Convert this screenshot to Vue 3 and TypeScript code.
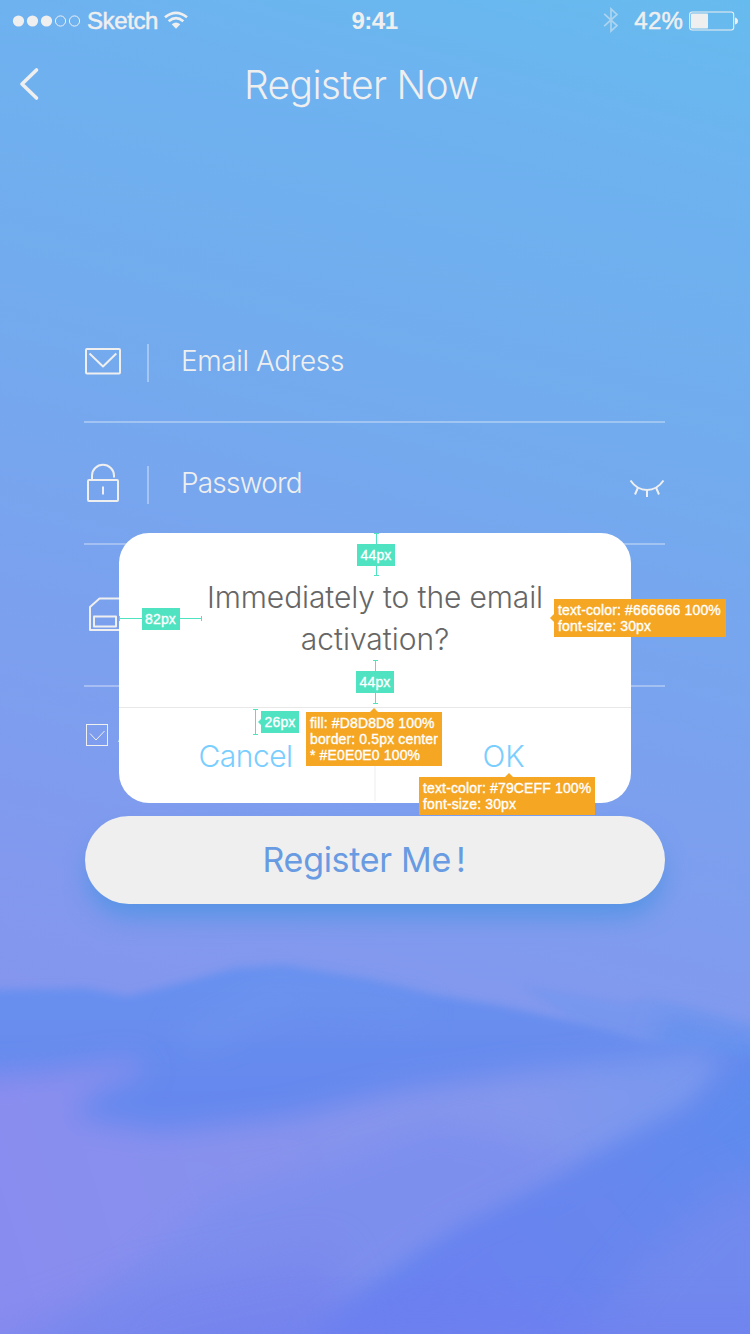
<script setup lang="ts">
interface Measure { id: string; label: string; axis: 'v' | 'h' }
interface Note { id: string; arrow: 'left' | 'top'; lines: string[] }

const measures: Measure[] = [
  { id: 'm-top', label: '44px', axis: 'v' },
  { id: 'm-left', label: '82px', axis: 'h' },
  { id: 'm-mid', label: '44px', axis: 'v' },
]
const notes: Note[] = [
  { id: 'n-text', arrow: 'left', lines: ['text-color: #666666 100%', 'font-size: 30px'] },
  { id: 'n-line', arrow: 'top', lines: ['fill: #D8D8D8 100%', 'border: 0.5px center', '* #E0E0E0 100%'] },
  { id: 'n-ok', arrow: 'top', lines: ['text-color: #79CEFF 100%', 'font-size: 30px'] },
]
</script>

<template>
  <div class="screen">
    <svg class="scenery" viewBox="0 0 750 1334" aria-hidden="true">
      <defs>
        <filter id="b3" x="-20%" y="-20%" width="140%" height="140%"><feGaussianBlur stdDeviation="4" /></filter>
        <filter id="b14" x="-30%" y="-30%" width="160%" height="160%"><feGaussianBlur stdDeviation="14" /></filter>
        <filter id="b24" x="-30%" y="-30%" width="160%" height="160%"><feGaussianBlur stdDeviation="22" /></filter>
        <linearGradient id="hill" x1="0" y1="960" x2="0" y2="1100" gradientUnits="userSpaceOnUse">
          <stop offset="0" stop-color="#6992ef" /><stop offset="1" stop-color="#6588ee" />
        </linearGradient>
        <linearGradient id="violet" x1="0" y1="1260" x2="650" y2="1060" gradientUnits="userSpaceOnUse">
          <stop offset="0" stop-color="#898cef" /><stop offset=".4" stop-color="#8792ed" /><stop offset=".8" stop-color="#8497ed" /><stop offset="1" stop-color="#7a98ee" />
        </linearGradient>
        <linearGradient id="deep" x1="750" y1="1080" x2="450" y2="1334" gradientUnits="userSpaceOnUse">
          <stop offset="0" stop-color="#5f8cee" /><stop offset=".5" stop-color="#6786ee" /><stop offset="1" stop-color="#6b80f0" />
        </linearGradient>
      </defs>
      <path filter="url(#b3)" fill="#6994ee" d="M520 984 L622 1002 L655 998 L760 1027 V1120 H600 V1040 Z" opacity=".4" />
      <path filter="url(#b14)" fill="#6491ee" d="M665 1016 L780 1044 V1100 H640 Z" />
      <path filter="url(#b3)" fill="url(#hill)" d="M-20 990 L86 988 L128 996 L191 980 L235 968 L285 965 L373 980 L431 994 L502 1006 L575 1022 L646 1042 L770 1060 V1350 H-20 Z" />
      <path filter="url(#b14)" fill="#7095ef" opacity=".6" d="M270 980 L420 1000 L430 1018 L300 1010 L200 1050 L170 1030 Z" />
      <path filter="url(#b14)" fill="url(#violet)" d="M-50 1078 L60 1070 L130 1060 L150 1070 L95 1092 L70 1116 L160 1132 L290 1117 L400 1090 L550 1068 L710 1050 L720 1070 L690 1112 L590 1160 L500 1205 L410 1250 L340 1300 L240 1400 H-50 Z" />
      <path filter="url(#b14)" fill="#7c8eee" opacity=".8" d="M435 1123 L500 1136 L575 1158 L510 1200 L400 1260 L300 1350 L60 1400 L40 1340 L140 1262 L215 1200 L340 1160 Z" />
      <path filter="url(#b24)" fill="#7684ed" opacity=".7" d="M-20 1345 L150 1285 L330 1250 L380 1400 H-20 Z" />
      <path filter="url(#b14)" fill="url(#deep)" d="M780 1050 L740 1068 L700 1105 L620 1150 L550 1188 L460 1230 L390 1285 L320 1330 L280 1400 H800 Z" />
      <path filter="url(#b24)" fill="#748aee" opacity=".8" d="M790 1160 L700 1200 L620 1290 L560 1370 H790 Z" />
      <path filter="url(#b24)" fill="#7080ef" opacity=".6" d="M180 1340 L400 1300 L620 1310 L800 1310 V1380 H150 Z" />
    </svg>

    <header class="status">
      <div class="carrier">
        <svg width="68" height="14" viewBox="0 0 68 14" fill="#efefef">
          <circle cx="6.5" cy="7" r="5.6" /><circle cx="20.5" cy="7" r="5.6" /><circle cx="34.5" cy="7" r="5.6" />
          <circle cx="48.5" cy="7" r="5.1" fill="none" stroke="#efefef" /><circle cx="62.5" cy="7" r="5.1" fill="none" stroke="#efefef" />
        </svg>
        <span class="sketch">Sketch</span>
        <svg class="wifi" width="24" height="19" viewBox="0 0 24 19" fill="none" stroke="#efefef" stroke-width="2.7">
          <path d="M1 6.2 Q12 -2.6 23 6.2" /><path d="M4.7 10.2 Q12 4.2 19.3 10.2" />
          <path d="M7.7 13.3 Q12 9.6 16.3 13.3 L12 17.8 Z" fill="#efefef" stroke="none" />
        </svg>
      </div>
      <span class="clock">9:41</span>
      <div class="power">
        <svg width="16" height="26" viewBox="0 0 16 26" fill="none" stroke="#efefef" stroke-width="1.7" opacity=".5">
          <path d="M1.2 6.8 L14 18.6 L8 24 V2 L14 7.4 L1.2 19.2" />
        </svg>
        <span class="percent">42%</span>
        <svg class="battery" width="50" height="20" viewBox="0 0 50 20">
          <rect x=".7" y="1" width="44" height="18" rx="2.5" fill="none" stroke="#efefef" stroke-width="1.1" />
          <rect x="2" y="2.5" width="17" height="15" rx=".8" fill="#efefef" />
          <path d="M46 6.5 Q49 7.5 49 10 T46 13.5Z" fill="#efefef" />
        </svg>
      </div>
    </header>

    <nav class="nav">
      <svg class="back" width="22" height="36" viewBox="0 0 22 36" fill="none" stroke="#efefef" stroke-width="3.6" stroke-linecap="round" stroke-linejoin="round">
        <path d="M17.5 4 L3 18 L17.5 32" />
      </svg>
      <h1 class="title">Register Now</h1>
    </nav>

    <main class="form">
      <div class="row">
        <svg class="icon" width="38" height="42" viewBox="0 0 38 42" fill="none" stroke="#efefef" stroke-width="2" stroke-linejoin="round">
          <rect x="2" y="9" width="34" height="24.5" rx="1" /><path d="M5.5 13.5 L19 26.5 L32.3 13.5" />
        </svg>
        <i class="bar"></i><span class="field email">Email Adress</span>
      </div>
      <div class="row">
        <svg class="icon" width="38" height="42" viewBox="0 0 38 42" fill="none" stroke="#efefef" stroke-width="2" stroke-linejoin="round">
          <rect x="4" y="18" width="30" height="21" rx="1" /><path d="M8 18 V13.5 A11 10.7 0 0 1 30 13.5 V15.5" /><path d="M19 24.5 V32.5" />
        </svg>
        <i class="bar"></i><span class="field password">Password</span>
        <svg class="eye" width="36" height="20" viewBox="0 0 36 20" fill="none" stroke="#efefef" stroke-width="2">
          <path d="M1.5 2.5 Q8 12 18 12 T34.5 2.5" /><path d="M9 9.5 L6 16.5 M18 12 V19 M27 9.5 L30 16.5" />
        </svg>
      </div>
      <div class="row tall">
        <svg class="icon" width="38" height="42" viewBox="0 0 38 42" fill="none" stroke="#efefef" stroke-width="2" stroke-linejoin="round">
          <path d="M36 4.5 H15.5 L6 13 V36 H36 Z" /><rect x="10" y="22.5" width="22" height="10" />
        </svg>
      </div>
      <div class="agree">
        <svg width="22" height="22" viewBox="0 0 22 22" fill="none" stroke="#efefef">
          <rect x=".5" y=".5" width="21" height="21" /><path d="M4 9.5 L10 16 L18.5 7" />
        </svg>
        <span class="terms">A</span>
      </div>
      <button class="submit"><span>Register Me<b>!</b></span></button>
    </main>

    <section class="dialog">
      <p class="message"><span class="l1">Immediately to the email</span><span class="l2">activation?</span></p>
      <div class="actions"><span class="cancel">Cancel</span><span class="ok">OK</span></div>
    </section>

    <div v-for="m in measures" :key="m.id" class="measure" :class="[m.axis, m.id]"><span class="tag">{{ m.label }}</span></div>
    <div class="measure v m-side"></div>
    <span class="tag side-tag">26px</span>
    <div v-for="n in notes" :key="n.id" class="note" :class="[n.arrow, n.id]">
      <span v-for="l in n.lines" :key="l">{{ l }}</span>
    </div>
  </div>
</template>

<style>
body { margin: 0; }
</style>

<style scoped>
.screen { position: relative; width: 750px; height: 1334px; overflow: hidden; color: #efefef;
  font-family: Inter, "Liberation Sans", sans-serif; font-weight: 300; white-space: nowrap;
  background: linear-gradient(195deg, #66bbee 0%, #6eb2f0 13%, #72acee 30%, #79a3ee 47%, #8299ee 69%, #8496ee 77%); }
.scenery { position: absolute; inset: 0; width: 750px; height: 1334px; }
.status { position: relative; height: 40px; display: grid; grid-template-columns: 1fr auto 1fr; align-items: center;
  padding: 0 11px 0 12px; font: 400 24px/28px "Liberation Sans", sans-serif; box-sizing: border-box; }
.carrier, .power { display: flex; align-items: center; }
.carrier > svg { margin-top: 1px; }
.sketch { margin-left: 7px; letter-spacing: -.4px; -webkit-text-stroke: .5px #efefef; margin-top: 1px; }
.carrier > .wifi { margin: 0 0 0 6px; }
.clock { font-weight: 700; letter-spacing: -.5px; margin: 1px 0 0 -2px; }
.power { justify-content: flex-end; }
.percent { margin: 1px 6px 0 15px; letter-spacing: .2px; -webkit-text-stroke: .5px #efefef; }
.battery { margin-top: 1px; }
.nav { position: relative; height: 90px; display: grid; grid-template-columns: 244px 1fr; align-items: center; }
.back { margin: -2px 0 0 19px; }
.title { margin: 0; font-size: 39px; line-height: 48px; font-weight: 300; letter-spacing: -.65px; }
.form { position: relative; width: 581px; margin: 171px 0 0 84px; }
.row { height: 120px; border-bottom: 2px solid rgba(255,255,255,.32); display: flex; align-items: center; }
.row.tall { height: 140px; }
.bar { width: 2px; height: 38px; margin: 4px 0 0 25px; background: rgba(255,255,255,.35); }
.field { margin-left: 32px; font-size: 28px; line-height: 36px; font-weight: 300; letter-spacing: -.4px; }
.password { letter-spacing: -.8px; }
.eye { margin: 10px 0 0 auto; }
.agree { display: flex; height: 22px; margin: 37px 0 0 2px; align-items: center; }
.terms { margin-left: 10px; font: 22px/22px "Liberation Sans", sans-serif; }
.submit { display: flex; align-items: center; justify-content: center; width: 580px; height: 88px; margin: 70px 0 0 1px;
  padding: 0 22px 0 0; box-sizing: border-box; border: 0; border-radius: 44px; background: #efefef; color: #689be2;
  font: 400 34px/44px Inter, sans-serif; letter-spacing: -.3px; box-shadow: 0 15px 24px -2px #5794e5; }
.submit b { font-weight: 400; margin-left: 5px; }
.dialog { position: absolute; left: 119px; top: 533px; width: 512px; height: 270px; border-radius: 30px; background: #fff; overflow: hidden; }
.message { display: flex; flex-direction: column; align-items: center; margin: 0; padding-top: 43px; height: 131px; color: #666;
  font-size: 30px; line-height: 42px; border-bottom: 1px solid #e8e8e8; }
.l1 { letter-spacing: -.12px; }
.actions { display: grid; grid-template-columns: 257px 1fr; height: 95px; color: #79ceff; font: 300 30px/96px Inter, sans-serif; text-align: center; }
.cancel { border-right: 2px solid #f6f6f6; height: 93px; letter-spacing: -.5px; padding-right: 2px; }
.tag { display: block; background: #50e3c2; width: 38px; height: 22px; text-align: center; color: #fff;
  font: 400 14px/23px "Liberation Sans", sans-serif; letter-spacing: .1px; -webkit-text-stroke: .35px #fff; }
.measure { position: absolute; display: flex; align-items: center; justify-content: center; box-sizing: border-box; color: #50e3c2; }
.measure.v { width: 5px; border: solid #50e3c2; border-width: 1px 0; background: linear-gradient(#50e3c2, #50e3c2) center / 1px 100% no-repeat; }
.measure.h { height: 5px; border: solid #50e3c2; border-width: 0 1px; background: linear-gradient(#50e3c2, #50e3c2) center / 100% 1px no-repeat; }
.measure .tag { flex: none; }
.measure.v .tag { margin-right: 1px; }
.m-top { left: 374px; top: 533px; height: 43px; }
.m-mid { left: 373px; top: 660px; height: 44px; }
.m-left { left: 119px; top: 616px; width: 83px; }
.m-side { left: 253px; top: 709px; height: 26px; }
.side-tag { position: absolute; left: 261px; top: 711px; }
.side-tag::before { content: ""; position: absolute; left: -3px; top: 8px; border: solid transparent; border-width: 3px 3px 3px 0; border-right-color: #50e3c2; }
.note { position: absolute; display: flex; flex-direction: column; padding: 3px 4px; box-sizing: border-box; background: #f5a623; color: #fff;
  font: 400 14px/16px "Liberation Sans", sans-serif; letter-spacing: .14px; -webkit-text-stroke: .35px #fff; }
.note::before { content: ""; position: absolute; border: 4px solid transparent; }
.note.left::before { left: -8px; top: 15px; border-right-color: #f5a623; }
.note.top::before { top: -8px; left: 64px; border-bottom-color: #f5a623; }
.n-text { left: 554px; top: 599px; width: 172px; height: 38px; }
.n-line { left: 306px; top: 712px; width: 136px; height: 54px; }
.n-ok { left: 419px; top: 777px; width: 176px; height: 38px; }
.note.n-ok::before { left: 86px; }
</style>
